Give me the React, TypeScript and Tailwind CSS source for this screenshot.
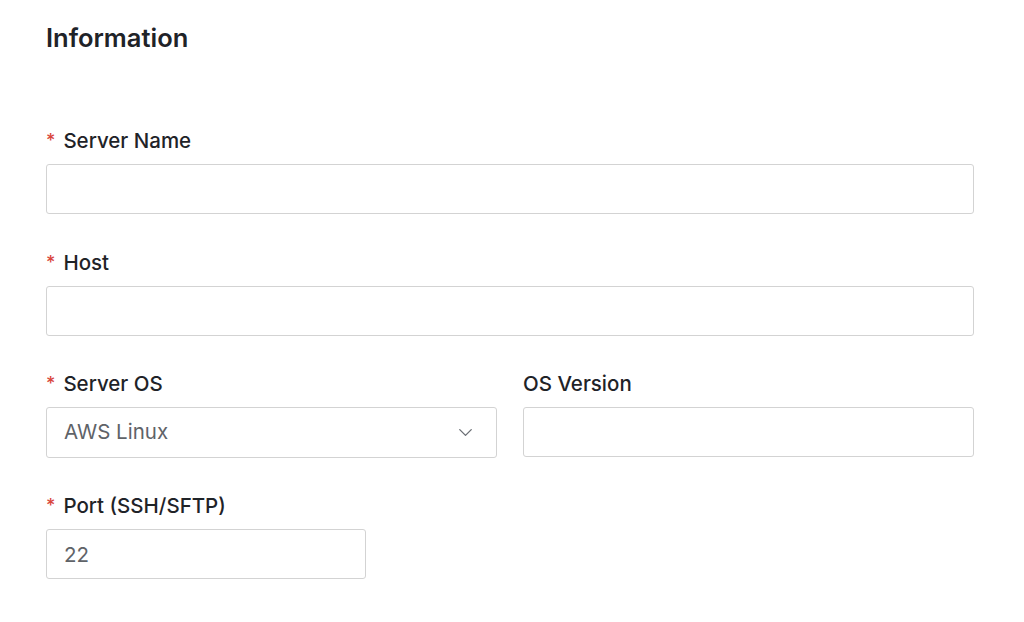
import { ChevronDown } from 'lucide-react'

const labelCls = 'flex items-center h-6 text-[20.5px] font-medium text-[#1f2328] leading-6 pt-px'
const inputCls =
  'h-[50px] w-full rounded-[3px] border border-[#d3d3d3] bg-white px-[17px] text-[20.5px] text-[#5f6368] outline-none'

function Label({ text, required }: { text: string; required?: boolean }) {
  return (
    <label className={labelCls}>
      {required && <span className="mr-2 text-[#d9463c] text-[18px]">*</span>}
      {text}
    </label>
  )
}

export default function App() {
  return (
    <div className="min-h-screen bg-white px-[46px] pt-6 font-['Inter',sans-serif]">
      <h2 className="h-7 text-[25.5px] font-semibold leading-7 text-[#1f2328]">Information</h2>

      <div className="mt-[76px] flex w-[928px] flex-col gap-[35px]">
        <div className="mb-px flex flex-col gap-3">
          <Label text="Server Name" required />
          <input className={inputCls} />
        </div>

        <div className="flex flex-col gap-3">
          <Label text="Host" required />
          <input className={inputCls} />
        </div>

        <div className="grid grid-cols-2 gap-[26px]">
          <div className="flex flex-col gap-3">
            <Label text="Server OS" required />
            <div className="relative">
              <div className={`${inputCls} !h-[51px] flex items-center`}>AWS Linux</div>
              <ChevronDown
                className="absolute right-[20px] top-[14px] text-[#6b6f75]"
                size={23}
                strokeWidth={1.4}
              />
            </div>
          </div>
          <div className="flex flex-col gap-3">
            <Label text="OS Version" />
            <input className={inputCls} />
          </div>
        </div>

        <div className="flex flex-col gap-3">
          <Label text="Port (SSH/SFTP)" required />
          <input className={`${inputCls} !w-[320px]`} defaultValue="22" />
        </div>
      </div>
    </div>
  )
}
